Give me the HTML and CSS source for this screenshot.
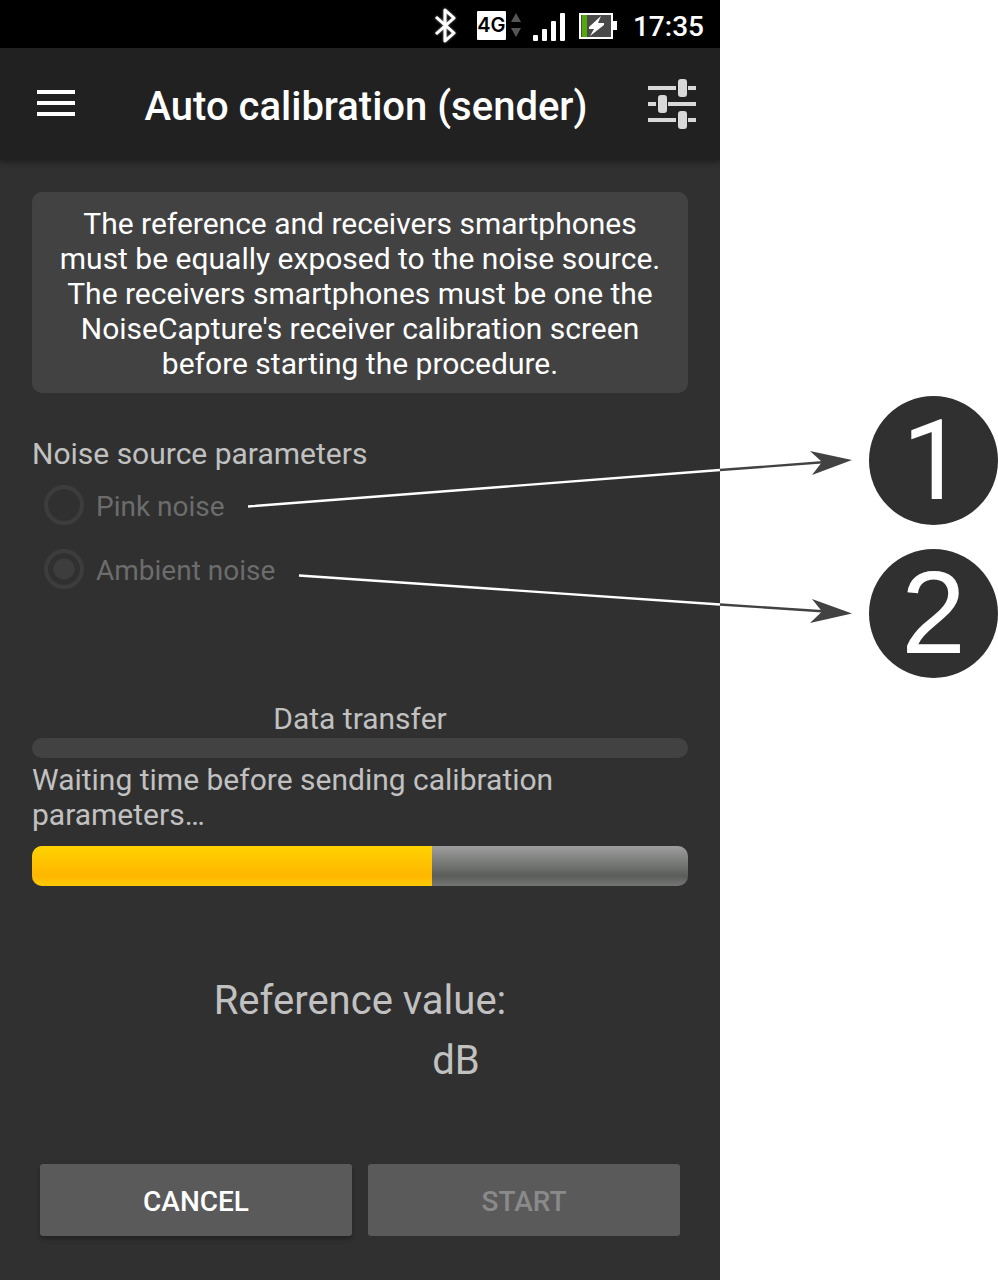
FILE: index.html
```html
<!DOCTYPE html>
<html lang="en">
<head>
<meta charset="utf-8">
<meta name="viewport" content="width=device-width, initial-scale=1">
<title>Auto calibration (sender)</title>
<link rel="stylesheet" href="styles.css">
</head>
<body>
<div class="figure">
  <div class="phone">
    <div class="status">
      <svg class="bluetooth" width="26" height="38" viewBox="0 0 26 38" aria-label="Bluetooth"><path d="M3 10L21 26L12 34V3L21 11L3 27"/></svg>
      <span class="network">4G</span>
      <svg width="10" height="26" viewBox="0 0 10 26" aria-hidden="true"><path fill="#555" d="M5 0L10 9H0zM5 24L0 15H10z"/></svg>
      <svg class="signal" width="34" height="30" viewBox="0 0 34 30" aria-label="Signal"><g fill="#fff"><rect x="0" y="24" width="5" height="6" rx="1"/><rect x="9" y="18" width="5" height="12" rx="1"/><rect x="18" y="10" width="5" height="20" rx="1"/><rect x="27" y="2" width="5" height="28" rx="1"/></g></svg>
      <svg class="battery" width="38" height="26" viewBox="0 0 38 26" aria-label="Battery charging"><path fill="#fff" d="M0 0h34v8h4v9h-4v9H0z"/><path fill="#4a4a4a" d="M2 2h30v22H2z"/><path fill="#55a80c" d="M3 2h5v22H3z"/><path fill="#fff" d="M22 3L10 14V16H15L11 23L25 12V10H19z"/></svg>
      <time>17:35</time>
    </div>
    <header class="toolbar">
      <button class="icon-button" type="button" aria-label="Menu"><svg width="38" height="28" viewBox="0 0 38 28"><path fill="#fff" d="M0 0h38v4H0zM0 11h38v4H0zM0 22h38v4H0z"/></svg></button>
      <h1>Auto calibration (sender)</h1>
      <button class="icon-button" type="button" aria-label="Settings"><svg width="50" height="50" viewBox="0 0 50 50"><path fill="#d8d8d8" d="M1 7h28v4H1zM41 7h8v4h-8zM1 23h8v4H1zM21 23h28v4H21zM1 39h28v4H1zM41 39h8v4h-8z"/><g fill="#d8d8d8"><rect x="31" y="0" width="9" height="18" rx="3"/><rect x="11" y="16" width="9" height="18" rx="3"/><rect x="31" y="32" width="9" height="18" rx="3"/></g></svg></button>
    </header>
    <main class="content">
      <p class="notice">The reference and receivers smartphones must be equally exposed to the noise source. The receivers smartphones must be one the NoiseCapture's receiver calibration screen before starting the procedure.</p>
      <fieldset class="source" disabled>
        <legend>Noise source parameters</legend>
        <label class="option"><input type="radio" name="source"><span>Pink noise</span></label>
        <label class="option"><input type="radio" name="source" checked><span>Ambient noise</span></label>
      </fieldset>
      <section class="transfer">
        <label class="transfer-title" for="transfer">Data transfer</label>
        <progress class="thin" id="transfer" value="0" max="100"></progress>
        <label class="waiting" for="waiting">Waiting time before sending calibration parameters…</label>
        <progress class="thick" id="waiting" value="61" max="100"></progress>
      </section>
      <section class="reference">
        <h2>Reference value:</h2>
        <p class="level"><output></output><span>dB</span></p>
      </section>
      <div class="actions">
        <button class="action" type="button">CANCEL</button>
        <button class="action" type="button" disabled>START</button>
      </div>
    </main>
  </div>
  <ol class="callouts">
    <li class="plain-one">1</li>
    <li>2</li>
  </ol>
  <svg class="arrows" viewBox="0 0 998 1280" aria-hidden="true">
    <g fill="none" stroke-width="2.4">
      <path stroke="#fff" d="M248 506.500L720 470M299 575.500L720 604.500"/>
      <path stroke="#424242" d="M720 470L826 462M720 604.500L826 611.500"/>
    </g>
    <path fill="#424242" d="M852 460L810 451L822 462L812 475zM852 613.500L812 599L822 611.500L810 623z"/>
  </svg>
</div>
</body>
</html>
```
FILE: styles.css
```css
* {
  box-sizing: border-box;
}

body {
  margin: 0;
  background: #fff;
  font-family: Roboto, "Liberation Sans", sans-serif;
}

h1, h2, p, ol, fieldset {
  margin: 0;
  padding: 0;
}

button {
  border: 0;
  font-family: inherit;
}

.figure {
  position: relative;
  display: grid;
  grid-template-columns: 720fr 278fr;
  min-height: 100vh;
}

.phone {
  display: flex;
  flex-direction: column;
  min-width: 0;
  overflow: hidden;
  background: #303030;
  color: #c1c1c1;
  font-size: 30px;
  line-height: 35px;
}

.status {
  display: flex;
  align-items: center;
  justify-content: flex-end;
  height: 48px;
  padding: 3px 16px 0 0;
  background: #000;
  color: #fff;
}

.bluetooth {
  margin-right: 18px;
  fill: none;
  stroke: #fff;
  stroke-width: 3;
  stroke-linejoin: round;
  filter: drop-shadow(0 0 1px #999);
}

.network {
  width: 29px;
  margin-right: 5px;
  border-radius: 1px;
  background: #fff;
  color: #000;
  font-family: Inter, sans-serif;
  font-size: 20px;
  font-weight: 600;
  line-height: 29px;
  text-align: center;
}

.signal {
  margin: 0 12px;
}

.battery {
  margin-right: 16px;
}

.status time {
  padding-top: 2px;
  font-size: 28px;
  font-weight: 500;
}

.toolbar {
  position: relative;
  display: flex;
  align-items: center;
  justify-content: space-between;
  height: 112px;
  padding: 0 23px 0 37px;
  background: #212121;
  box-shadow: 0 2px 6px rgba(0, 0, 0, .4);
}

.icon-button {
  display: flex;
  padding: 0;
  background: none;
}

.toolbar h1 {
  padding: 4px 0 0 10px;
  color: #fff;
  font-size: 40px;
  font-weight: 500;
  line-height: 47px;
}

.content {
  display: flex;
  flex: 1;
  flex-direction: column;
  padding: 32px 32px 44px;
}

.notice {
  padding: 14px 24px 12px;
  border-radius: 10px;
  background: #424242;
  color: #fff;
  text-align: center;
}

.source {
  min-width: 0;
  margin-top: 43px;
  border: 0;
}

.source legend {
  padding: 0 0 2px;
}

.option {
  display: flex;
  align-items: center;
  gap: 12px;
  height: 64px;
  padding-left: 12px;
  color: #6c6c6c;
  font-size: 28px;
}

.option span {
  padding-top: 3px;
}

.option input {
  width: 40px;
  height: 40px;
  margin: 0;
  border: 4px solid #3d3d3d;
  border-radius: 50%;
  appearance: none;
}

.option input:checked {
  background: radial-gradient(circle, #3d3d3d 10px, transparent 11px);
}

.transfer {
  display: flex;
  flex-direction: column;
  margin-top: 100px;
}

.transfer-title {
  text-align: center;
}

progress {
  display: block;
  width: 100%;
  border: 0;
  overflow: hidden;
  appearance: none;
}

.thin {
  height: 20px;
  margin: 2px 0 4px;
  border-radius: 10px;
}

.thin::-webkit-progress-bar {
  background: #424242;
}

.thick {
  height: 40px;
  margin-top: 14px;
  border-radius: 10px;
}

.thick::-webkit-progress-bar {
  background: linear-gradient(#9d9e9d, #5a5d5a 75%, #747674);
}

.thick::-webkit-progress-value {
  background: linear-gradient(#ffd300, #ffb600 75%, #ffcb00);
}

.reference {
  margin-top: 91px;
  font-size: 40px;
  line-height: 47px;
}

.reference h2 {
  font-size: 40px;
  font-weight: 400;
  text-align: center;
}

.level {
  display: grid;
  grid-template-columns: 61% 1fr;
  margin-top: 13px;
}

.level span {
  grid-column: 2;
}

.actions {
  display: flex;
  gap: 16px;
  margin-top: auto;
  padding: 0 8px;
}

.action {
  flex: 1;
  height: 72px;
  padding: 3px 0 0;
  border-radius: 3px;
  background: #5a5a5a;
  box-shadow: 0 3px 4px rgba(0, 0, 0, .3);
  color: #fff;
  font-size: 28px;
  font-weight: 500;
}

.action:disabled {
  box-shadow: none;
  color: #8a8a8a;
}

.callouts {
  display: flex;
  flex-direction: column;
  align-items: flex-end;
  gap: 24px;
  padding-top: 396px;
  list-style: none;
}

.callouts li {
  width: 129px;
  height: 129px;
  border-radius: 50%;
  background: #303030;
  color: #fff;
  font-family: "Liberation Sans", Arial, sans-serif;
  font-size: 116px;
  line-height: 129px;
  text-align: center;
}

/* Roboto's numeral one has no foot serif */
.callouts .plain-one {
  font-family: Roboto, sans-serif;
  font-size: 112px;
}

.arrows {
  position: absolute;
  top: 0;
  left: 0;
  width: 100%;
  pointer-events: none;
}
```
